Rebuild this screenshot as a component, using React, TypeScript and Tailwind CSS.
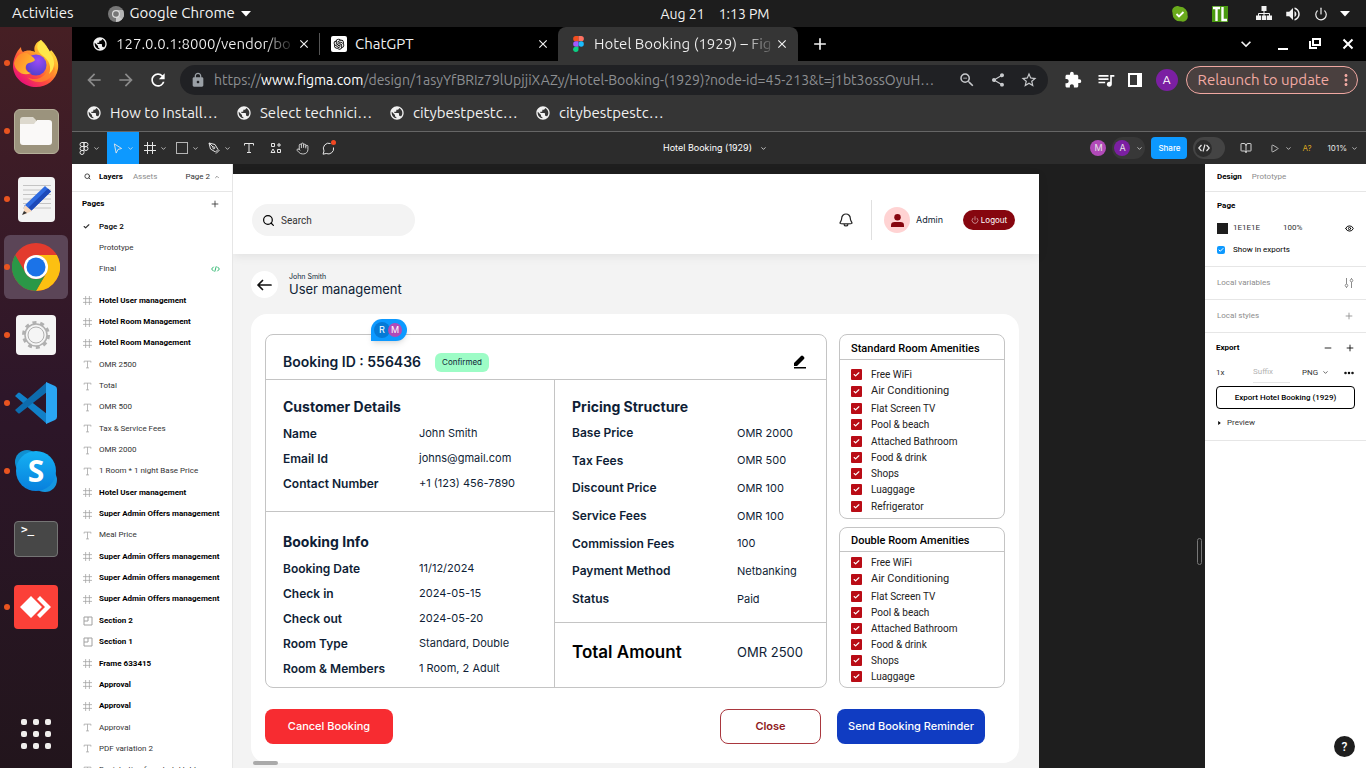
import React from "react";
import {
  MdPublic, MdArrowBack, MdArrowForward, MdRefresh, MdLock, MdZoomOut, MdShare, MdStarBorder,
  MdExtension, MdQueueMusic, MdClose, MdAdd, MdMoreVert, MdKeyboardArrowDown, MdVolumeUp,
} from "react-icons/md";
import { AiOutlineOpenAI } from "react-icons/ai";
import { ChevronDown, ChevronUp, Hand, BookOpen, Plus, Minus, Search, Check, Play, Power, Eye, Ellipsis } from "lucide-react";

const ui = "font-['Ubuntu','Noto_Sans',sans-serif]";
const toolbarText = "font-['Inter',sans-serif] text-[8px] leading-[12px]";
const panelText = "font-['Roboto',sans-serif] text-[8px] leading-[12px]";

/* ---------- Desktop top bar ---------- */

function SystemBar() {
  return (
    <header className="flex h-[27px] shrink-0 items-center bg-[#1d1d1d] pr-4 pl-3 text-[15px] text-[#f2f2f2]">
      <div className="flex flex-1 items-center gap-[34px]">
        <button>Activities</button>
        <button className="flex items-center gap-1.5">
          <svg viewBox="0 0 16 16" className="size-4">
            <circle cx="8" cy="8" r="8" fill="#777" />
            <path d="M8 8h8a8 8 0 0 1-8 8z" fill="#c9c9c9" />
            <path d="M8 4h7a8 8 0 0 1 1 4 8 8 0 0 1-2 5l-6-5z" fill="#b4b4b4" />
            <circle cx="8" cy="8" r="4" fill="#ddd" />
            <circle cx="8" cy="8" r="2.8" fill="#777" />
          </svg>
          <span>Google Chrome</span>
          <svg viewBox="0 0 10 6" className="h-1.5 w-2.5"><path d="M0 0h10L5 5.5z" fill="#fff" /></svg>
        </button>
      </div>
      <div className="flex gap-3.5 pl-[68px] text-sm">
        <span>Aug 21</span><span>1:13 PM</span>
      </div>
      <div className="flex flex-1 items-center justify-end">
        <svg viewBox="0 0 16 16" className="mr-6 size-4">
          <path d="M5 0a5 5 0 0 1 3 .8A7.500 7.500 0 0 1 15.500 9 5 5 0 0 1 9 15.300 7.500 7.500 0 0 1 .6 7 5 5 0 0 1 5 0z" fill="#6aab1c" />
          <path d="M4.500 8l2.500 2.500L11.500 6" fill="none" stroke="#fff" strokeWidth="1.800" />
        </svg>
        <span className="mr-7 size-4 bg-[#4a9a10]">
          <svg viewBox="0 0 16 16" className="size-4"><path d="M1 2h7M4.500 2v13M10.500 1v13h4.500" fill="none" stroke="#fff" strokeWidth="2.400" /></svg>
        </span>
        <svg viewBox="0 0 16 16" className="mr-3 size-4" fill="#f2f2f2">
          <path d="M5.500 0h5v5h-5zM0 9.500h5v4.500H0zM5.800 9.500h4.500v4.500H5.800zM11 9.500h5v4.500h-5z" />
          <path d="M8 5v5M2.500 10V7.500h11V10" fill="none" stroke="#f2f2f2" />
        </svg>
        <MdVolumeUp className="mr-3 size-[18px]" />
        <Power className="mr-3 size-[14px]" strokeWidth={2} />
        <svg viewBox="0 0 10 6" className="h-1.5 w-2.5"><path d="M0 0h10L5 5.500z" fill="#fff" /></svg>
      </div>
    </header>
  );
}

/* ---------- Dock ---------- */

const FirefoxIcon = () => (
  <svg viewBox="0 0 46 48" className="h-12 w-[46px]">
    <defs>
      <linearGradient id="ff1" x1="0.9" y1="0.1" x2="0.2" y2="0.95">
        <stop offset="0" stopColor="#fff14a" /><stop offset="0.35" stopColor="#ffa629" />
        <stop offset="0.65" stopColor="#ff4f3c" /><stop offset="1" stopColor="#e60b7d" />
      </linearGradient>
      <radialGradient id="ff2" cx="0.6" cy="0.3" r="0.8">
        <stop offset="0" stopColor="#9a4bf5" /><stop offset="1" stopColor="#4a3fc9" />
      </radialGradient>
      <linearGradient id="ff3" x1="0" y1="0" x2="1" y2="0.6">
        <stop offset="0" stopColor="#ff7b2a" /><stop offset="1" stopColor="#ffc12e" />
      </linearGradient>
    </defs>
    <path d="M28 1c5 4 7 8 8 12 1-1 2-1 2-2 6 6 8 13 7 19C43 41 34 48 23 48S1 40 0 28C0 20 3 13 8 8c0 3 1 4 2 5 3-2 8-2 12 0-2-5 1-10 6-12z" fill="url(#ff1)" />
    <circle cx="23" cy="26" r="10.500" fill="url(#ff2)" />
    <path d="M1 24c2-7 7-11 13-10 4 3 7 4 8 7-2 3-6 2-8 4-3 4-1 8 4 9-8 4-16-2-17-10z" fill="url(#ff3)" />
    <path d="M26 14c10 2 12 12 7 20-4 6-13 8-19 4 8 9 25 6 28-8-2-9-8-14-16-16z" fill="#ff8a2b" opacity=".75" />
    <path d="M28 1c-6 5-4 11 1 15 7 5 10 12 7 19 7-6 6-14 2-20C36 9 31 6 28 1z" fill="#ffe64a" />
  </svg>
);
const FilesIcon = () => (
  <div className="flex size-[45px] items-center justify-center rounded-md border border-[#b6b09a] bg-[#9b937d]">
    <svg viewBox="0 0 32 28" className="h-7 w-8">
      <path d="M0 3a3 3 0 0 1 3-3h10l3 3v6H0z" fill="#ddd9ce" />
      <path d="M0 7h14l3-4h12a3 3 0 0 1 3 3v19a3 3 0 0 1-3 3H3a3 3 0 0 1-3-3z" fill="#faf9f8" />
    </svg>
  </div>
);
const EditorIcon = () => (
  <svg viewBox="0 0 37 45" className="h-[45px] w-[37px]">
    <rect width="37" height="45" rx="4" fill="#f3f3f3" />
    <path d="M5 8.500h28M5 13h28M5 17.500h28M5 22h28M5 26.500h28M5 31h28" stroke="#c4c4c4" />
    <path d="M27 9l6 5.500L13 34l-7-5z" fill="#2f6be0" /><path d="M30 11.500l3 3L13 34l-3-3z" fill="#1d49b8" />
    <path d="M7 28l7 6-9 4z" fill="#f8d8bc" /><path d="M6 34l3 2-5 2z" fill="#333" />
  </svg>
);
const ChromeIcon = () => (
  <svg viewBox="0 0 48 48" className="size-12">
    <circle cx="24" cy="24" r="24" fill="#e33b2e" />
    <path d="M24 12h20.800A24 24 0 0 1 24 48l10.400-18z" fill="#fcc012" />
    <path d="M3.200 12L13.600 30A12 12 0 0 0 34.400 30L24 48A24 24 0 0 1 3.200 12z" fill="#2a9847" />
    <circle cx="24" cy="24" r="12" fill="#fff" /><circle cx="24" cy="24" r="9.500" fill="#1b73e8" />
  </svg>
);
const SettingsIcon = () => (
  <div className="flex size-10 items-center justify-center rounded bg-[#f5f5f5]">
    <svg viewBox="0 0 30 30" className="size-[30px]" fill="none" stroke="#b0b0b0">
      <circle cx="15" cy="15" r="12.500" strokeWidth="3" strokeDasharray="4 3.854" />
      <circle cx="15" cy="15" r="11" strokeWidth="1.500" /><circle cx="15" cy="15" r="8" />
    </svg>
  </div>
);
const CodeEditorIcon = () => (
  <svg viewBox="0 0 42 42" className="size-[42px]">
    <path d="M0 14l3-3q1-1 2 0l27 21v10z" fill="#1180c8" />
    <path d="M0 28l3 3q1 1 2 0l27-21V0z" fill="#0d6cae" />
    <path d="M31 0l9 4q2 1 2 3v28q0 2-2 3l-9 4z" fill="#2aa5f2" />
  </svg>
);
const SkypeIcon = () => (
  <div className="relative flex size-[42px] items-center justify-center font-['Open_Sans',sans-serif] text-[30px] leading-none font-bold text-white">
    <svg viewBox="0 0 42 42" className="absolute inset-0 size-[42px]">
      <defs><linearGradient id="sk" x1="0" y1="0" x2="0" y2="1"><stop offset="0" stopColor="#15b1f3" /><stop offset="1" stopColor="#0880dd" /></linearGradient></defs>
      <circle cx="12" cy="12" r="12" fill="#108fd0" /><circle cx="30" cy="30" r="12" fill="#1596e0" />
      <circle cx="21" cy="21" r="20" fill="url(#sk)" />
    </svg>
    <span className="relative">S</span>
  </div>
);
const TerminalIcon = () => (
  <div className="h-9 w-11 rounded border border-[#757575] bg-[#474747] px-1.5 pt-0.5 text-left font-['DejaVu_Sans_Mono',monospace] text-[11px] leading-3 font-bold text-white">&gt;_</div>
);
const AnyDeskIcon = () => (
  <div className="flex size-11 items-center justify-center rounded bg-[#fb4038]">
    <svg viewBox="0 0 32 22" className="h-[22px] w-8" fill="#fff"><path d="M0 11L11 0l11 11-11 11zM17 3l3-3 11 11-11 11-3-3 8-8z" /></svg>
  </div>
);

const dockApps = [
  { name: "Firefox", Icon: FirefoxIcon, running: true },
  { name: "Files", Icon: FilesIcon, running: true },
  { name: "Text Editor", Icon: EditorIcon, running: true },
  { name: "Google Chrome", Icon: ChromeIcon, running: true, active: true },
  { name: "Settings", Icon: SettingsIcon, running: true },
  { name: "Visual Studio Code", Icon: CodeEditorIcon, running: true },
  { name: "Skype", Icon: SkypeIcon, running: true },
  { name: "Terminal", Icon: TerminalIcon, running: false },
  { name: "AnyDesk", Icon: AnyDeskIcon, running: true },
];

function Dock() {
  return (
    <nav className="flex w-[72px] shrink-0 flex-col bg-linear-to-b from-[#461f24] via-[#2d1629] to-[#22151c] pt-0.5">
      {dockApps.map(({ name, Icon, running, active }) => (
        <button key={name} aria-label={name} className="relative flex h-[68px] shrink-0 items-center justify-center">
          <span className={active ? "flex size-16 items-center justify-center rounded-md bg-[#5b4557]" : "flex size-16 items-center justify-center"}>
            <Icon />
          </span>
          {running && <span className="absolute left-1 size-1.5 rounded-full bg-[#e95420]" />}
        </button>
      ))}
      <button aria-label="Show Applications" className="mt-auto mb-[19px] grid grid-cols-3 gap-1.5 self-center">
        {Array.from({ length: 9 }, (_, i) => <span key={i} className="size-1.5 rounded-[2px] bg-[#f0eeec]" />)}
      </button>
    </nav>
  );
}

/* ---------- Browser chrome ---------- */

const FigmaLogo = () => (
  <svg viewBox="0 0 12 18" className="h-4 w-[11px]">
    <path d="M3 0h3v6H3a3 3 0 0 1 0-6z" fill="#f24e1e" /><path d="M6 0h3a3 3 0 0 1 0 6H6z" fill="#ff7262" />
    <path d="M3 6h3v6H3a3 3 0 0 1 0-6z" fill="#a259ff" /><circle cx="9" cy="9" r="3" fill="#1abcfe" />
    <path d="M3 12h3v3a3 3 0 1 1-3-3z" fill="#0acf83" />
  </svg>
);

function TabStrip() {
  return (
    <div className="flex h-[34px] shrink-0 items-center bg-black text-[15px] text-[#f1f1f1]">
      <div className="flex w-[248px] items-center border-r border-[#555] pr-2 pl-5">
        <MdPublic className="mr-2 size-4 shrink-0" />
        <span className="flex-1 whitespace-nowrap"><span className="bg-linear-to-r from-[#f1f1f1] from-85% to-[#222] bg-clip-text text-transparent">127.0.0.1:8000/vendor/bo</span></span>
        <button aria-label="Close tab" className="shrink-0"><MdClose className="size-3.5" /></button>
      </div>
      <div className="flex w-[238px] items-center pr-2 pl-[11px]">
        <span className="mr-2 flex size-4 items-center justify-center rounded-xs bg-white text-black"><AiOutlineOpenAI className="size-3.5" /></span>
        <span className="flex-1">ChatGPT</span>
        <button aria-label="Close tab"><MdClose className="size-3.5" /></button>
      </div>
      <div className="flex w-60 items-center self-stretch rounded-t-lg bg-[#353535] pr-[9px] pl-[15px]">
        <FigmaLogo />
        <span className="ml-2.5 flex-1 whitespace-nowrap"><span className="bg-linear-to-r from-[#f1f1f1] from-85% to-[#555] bg-clip-text text-transparent">Hotel Booking (1929) – Fig</span></span>
        <button aria-label="Close tab" className="shrink-0"><MdClose className="size-3.5" /></button>
      </div>
      <button aria-label="New tab" className="ml-3"><MdAdd className="size-5" /></button>
      <div className="mr-3 ml-auto flex items-center">
        <button aria-label="Search tabs"><MdKeyboardArrowDown className="size-5" /></button>
        <button aria-label="Minimize" className="ml-[22px] flex h-3 w-2.5 items-end"><span className="h-0.5 w-2.5 bg-white" /></button>
        <button aria-label="Restore" className="ml-[21px]">
          <svg viewBox="0 0 12 12" className="size-3" fill="none" stroke="#fff" strokeWidth="2"><path d="M4 1h7v6H4zM1 3v7h7" /></svg>
        </button>
        <button aria-label="Close window" className="ml-[21px]"><svg viewBox="0 0 12 12" className="size-3" stroke="#fff" strokeWidth="2"><path d="M1.500 1.500l9 9M10.500 1.500l-9 9" /></svg></button>
      </div>
    </div>
  );
}

function AddressBar() {
  return (
    <div className="flex h-[38px] shrink-0 items-center bg-[#353535] pr-2 pl-3 text-white">
      <button aria-label="Back"><MdArrowBack className="size-5 text-[#8b8b8b]" /></button>
      <button aria-label="Forward" className="ml-3"><MdArrowForward className="size-5 text-[#8b8b8b]" /></button>
      <button aria-label="Reload" className="ml-3"><MdRefresh className="size-5" /></button>
      <div className="mr-4 ml-3 flex h-[30px] min-w-0 flex-1 items-center rounded-full bg-[#202124] px-2.5 text-[#c8cacd]">
        <MdLock className="size-4 shrink-0 text-[#9aa0a6]" />
        <span className="ml-2 min-w-0 flex-1 text-sm whitespace-nowrap text-[#8d8f92]">
          https://<span className="text-white">www.figma.com</span>/design/1asyYfBRIz79lUpjjiXAZy/Hotel-Booking-(1929)?node-id=45-213&amp;t=j1bt3ossOyuH…
        </span>
        <button aria-label="Zoom" className="ml-2.5"><MdZoomOut className="size-[18px]" /></button>
        <button aria-label="Share page" className="ml-3.5"><MdShare className="size-4" /></button>
        <button aria-label="Bookmark" className="ml-3.5"><MdStarBorder className="size-[18px]" /></button>
      </div>
      <button aria-label="Extensions"><MdExtension className="size-[18px]" /></button>
      <button aria-label="Media" className="ml-3.5"><MdQueueMusic className="size-5" /></button>
      <button aria-label="Side panel" className="ml-3"><svg viewBox="0 0 14 14" className="size-3.5"><path d="M0 0h14v14H0zM2 2v10h7V2z" fill="#fff" fillRule="evenodd" /></svg></button>
      <button className="ml-3.5 size-[22px] rounded-full bg-[#7b1fa2] text-xs">A</button>
      <button className="ml-2 flex h-7 items-center rounded-full border border-[#f0a8a2] bg-[#4a403f] pr-0.5 pl-[11px] text-[15px] whitespace-nowrap text-[#f2aaa3]">
        Relaunch to update<MdMoreVert className="ml-2 size-[18px]" />
      </button>
    </div>
  );
}

function Bookmarks() {
  const items = [
    ["How to Install…", "w-[150px]"], ["Select technici…", "w-[153px]"],
    ["citybestpestc…", "w-[146px]"], ["citybestpestc…", "w-[146px]"],
  ];
  return (
    <nav className="flex h-[33px] shrink-0 items-center border-b border-[#666] bg-[#353535] pb-1 pl-3.5 text-[15px] text-[#f1f1f1]">
      {items.map(([label, width], i) => (
        <a key={i} href="#" className={`flex shrink-0 items-center gap-2 whitespace-nowrap ${width}`}><MdPublic className="size-4" />{label}</a>
      ))}
    </nav>
  );
}

/* ---------- Figma toolbar ---------- */

const Chev = () => <ChevronDown className="size-[7px]" strokeWidth={2.5} />;
const thin = { fill: "none", stroke: "currentColor", strokeWidth: 1 } as const;

const FrameGlyph = ({ className }: { className: string }) => (
  <svg viewBox="0 0 12 12" className={className} {...thin}><path d="M3.500 0v12M8.500 0v12M0 3.500h12M0 8.500h12" /></svg>
);
const TextGlyph = ({ className }: { className: string }) => (
  <svg viewBox="0 0 12 12" className={className} {...thin}><path d="M1.500 3.500v-2h9v2M6 1.500v9M4 10.500h4" /></svg>
);
const SectionGlyph = () => (
  <svg viewBox="0 0 10 10" className="size-2.5" {...thin}><path d="M1 1h8v8H1zM1 5h4V1" /></svg>
);
const CodeGlyph = ({ className }: { className: string }) => (
  <svg viewBox="0 0 12 10" className={className} {...thin} strokeWidth={1.2}><path d="M3.500 2L.8 5l2.700 3M8.500 2l2.700 3-2.700 3M7 1.500L5 8.500" /></svg>
);

function FigmaToolbar() {
  const tool = "flex h-8 w-8 items-center justify-center gap-1";
  return (
    <div className={`flex h-8 shrink-0 items-center bg-[#2c2c2c] pr-1 text-[#e6e6e6] ${toolbarText}`}>
      <div className="flex flex-1 items-center">
        <button aria-label="Main menu" className="flex h-8 w-[35px] items-center justify-center gap-1">
          <svg viewBox="0 0 10 13" className="h-[13px] w-2.5" {...thin}><path d="M5 .5H3a2 2 0 0 0 0 4h2zM5 .5h2a2 2 0 0 1 0 4H5zM5 4.500H3a2 2 0 0 0 0 4h2zM5 8.500H3a2 2 0 1 0 2 2z" /><circle cx="7" cy="6.500" r="2" /></svg>
          <Chev />
        </button>
        <button aria-label="Move" className={`${tool} bg-[#0d99ff]`}><svg viewBox="0 0 10 12" className="h-[11px] w-2.5" {...thin}><path d="M1 1l8 5-4 1-2 4z" /></svg><Chev /></button>
        <button aria-label="Frame" className={tool}><FrameGlyph className="size-3" /><Chev /></button>
        <button aria-label="Rectangle" className={tool}><span className="size-3 border border-[#b5b5b5]" /><Chev /></button>
        <button aria-label="Pen" className={tool}>
          <svg viewBox="0 0 12 12" className="size-3" {...thin}><path d="M1 1l6 1.500 3 5L7.500 10l-5-3zM1 1l4 4M8 11.500l3.500-3.500" /><circle cx="5.800" cy="5.800" r="1" /></svg><Chev />
        </button>
        <button aria-label="Text" className="flex w-[27px] justify-center"><TextGlyph className="size-3" /></button>
        <button aria-label="Resources" className="flex w-[27px] justify-center">
          <svg viewBox="0 0 12 12" className="size-3" {...thin}><path d="M1.500 1.500h3v3h-3zM9 1v4M7 3h4M3 7l2 3.500H1z" /><path d="M7.500 7.500h3v3h-3z" /></svg>
        </button>
        <button aria-label="Hand" className="flex w-[26px] justify-center"><Hand className="size-[13px]" strokeWidth={1.6} /></button>
        <button aria-label="Comment" className="relative flex w-[26px] justify-center">
          <svg viewBox="0 0 13 13" className="size-[13px]" {...thin}><path d="M8.500 1.500A5.300 5.300 0 0 0 2 9l-1 3.200 3.200-.7A5.300 5.300 0 0 0 11.500 5.500" /></svg>
          <span className="absolute -top-0.5 right-[5px] size-[5px] rounded-full bg-[#f24822]" />
        </button>
      </div>
      <button className="flex items-center gap-2 text-[9px] text-white">Hotel Booking (1929)<Chev /></button>
      <div className="flex flex-1 items-center justify-end pr-1">
        <span className="flex size-4 items-center justify-center rounded-full bg-[#b14ab8] text-[9px]">M</span>
        <button className="ml-1.5 flex h-[22px] w-[33px] items-center gap-1.5 rounded-full bg-[#383838] pl-0.5">
          <span className="flex size-4 items-center justify-center rounded-full bg-[#7b1fa2] text-[9px]">A</span><Chev />
        </button>
        <button className="ml-1.5 h-[22px] w-9 rounded-sm bg-[#0d99ff] font-medium text-white">Share</button>
        <button aria-label="Dev mode" className="ml-1.5 flex h-[22px] w-8 items-center rounded-full bg-[#444] pl-0.5">
          <span className="flex size-[17px] items-center justify-center rounded-full bg-[#2c2c2c]"><CodeGlyph className="h-2.5 w-3" /></span>
        </button>
        <button aria-label="Library" className="ml-[15px]"><BookOpen className="size-3" strokeWidth={1.8} /></button>
        <button aria-label="Present" className="ml-[18px] flex items-center gap-1.5"><Play className="size-[9px]" /><Chev /></button>
        <span className="ml-2.5 text-[#d9a520]">A?</span>
        <button className="ml-4 flex items-center gap-1">101%<Chev /></button>
      </div>
    </div>
  );
}

/* ---------- Layers panel ---------- */

type Layer = ["frame" | "text" | "section", string];
const layers: Layer[] = [
  ["frame", "Hotel User management"], ["frame", "Hotel Room Management"], ["frame", "Hotel Room Management"],
  ["text", "OMR 2500"], ["text", "Total"], ["text", "OMR 500"], ["text", "Tax & Service Fees"], ["text", "OMR 2000"],
  ["text", "1 Room * 1 night Base Price"], ["frame", "Hotel User management"], ["frame", "Super Admin Offers management"],
  ["text", "Meal Price"], ["frame", "Super Admin Offers management"], ["frame", "Super Admin Offers management"],
  ["frame", "Super Admin Offers management"], ["section", "Section 2"], ["section", "Section 1"], ["frame", "Frame 633415"],
  ["frame", "Approval"], ["frame", "Approval"], ["text", "Approval"], ["text", "PDF variation 2"], ["text", "Registration form hotel table"],
];

function LayersPanel() {
  return (
    <aside className={`w-[161px] shrink-0 overflow-hidden border-r border-[#e6e6e6] bg-white text-[#333] ${panelText}`}>
      <div className="flex h-7 items-center border-b border-[#e6e6e6] pr-3 pb-0.5 pl-3">
        <Search className="mr-2 size-[7px]" strokeWidth={3} />
        <button className="font-bold text-black">Layers</button>
        <button className="ml-2.5 text-[#8c8c8c]">Assets</button>
        <button className="ml-auto flex items-center gap-1">Page 2<ChevronUp className="size-1.5" /></button>
      </div>
      <div className="flex h-6 items-center justify-between pr-3 pl-2.5">
        <h2 className="font-bold text-black">Pages</h2>
        <button aria-label="Add page"><Plus className="size-2.5" /></button>
      </div>
      <ul>
        {["Page 2", "Prototype", "Final"].map((p, i) => (
          <li key={p} className="flex h-[21px] items-center pr-3 pl-[11px]">
            <span className="w-4">{i === 0 && <Check className="size-[7px]" strokeWidth={4} />}</span>
            <span className={i === 0 ? "font-medium text-black" : ""}>{p}</span>
            {i === 2 && <CodeGlyph className="ml-auto h-2 w-[9px] text-[#14ae5c]" />}
          </li>
        ))}
      </ul>
      <ul className="mt-[11px] flex h-[491px] flex-col">
        {layers.map(([kind, name], i) => (
          <li key={i} className="flex flex-1 items-center pl-[11px] whitespace-nowrap">
            <span className="w-4 text-[#a0a0a0]">
              {kind === "frame" ? <FrameGlyph className="size-[9px]" /> : kind === "text" ? <TextGlyph className="size-[9px]" /> : <SectionGlyph />}
            </span>
            <span className={kind === "text" ? "" : "font-bold text-black"}>{name}</span>
          </li>
        ))}
      </ul>
    </aside>
  );
}

/* ---------- Properties panel ---------- */

function PropertiesPanel() {
  return (
    <aside className={`relative w-[161px] shrink-0 bg-white text-[#333] ${panelText}`}>
      <div className="flex h-7 items-center gap-2.5 border-b border-[#e6e6e6] pb-0.5 pl-3">
        <button className="font-bold text-black">Design</button><button className="text-[#8c8c8c]">Prototype</button>
      </div>
      <section className="h-[75px] border-b border-[#e6e6e6] pt-2 pr-3 pl-3">
        <h2 className="font-bold text-black">Page</h2>
        <div className="mt-2.5 flex items-center">
          <span className="mr-[5px] size-[11px] bg-[#1e1e1e]" />
          <span className="w-[50px]">1E1E1E</span><span>100%</span>
          <Eye className="ml-auto size-[9px] text-black" strokeWidth={2.5} />
        </div>
        <label className="mt-2.5 flex items-center gap-2 text-black">
          <span className="relative flex size-2">
            <input type="checkbox" defaultChecked className="size-2 appearance-none rounded-xs bg-[#0d99ff]" />
            <Check className="pointer-events-none absolute inset-px size-1.5 text-white" strokeWidth={4} />
          </span>
          Show in exports
        </label>
      </section>
      <div className="flex h-[33px] items-center justify-between border-b border-[#e6e6e6] px-3 text-[#8c8c8c]">
        Local variables
        <svg viewBox="0 0 10 10" className="size-2.5" {...thin}><path d="M2.500 0v6M2.500 9v1M7.500 0v1M7.500 4v6" /><circle cx="2.500" cy="7.500" r="1.300" /><circle cx="7.500" cy="2.500" r="1.300" /></svg>
      </div>
      <div className="flex h-[33px] items-center justify-between border-b border-[#e6e6e6] px-3 text-[#8c8c8c]">Local styles<Plus className="size-2.5" /></div>
      <section className="h-[108px] border-b border-[#e6e6e6] px-[11px] pt-[9px]">
        <div className="flex items-center text-black">
          <h2 className="font-bold">Export</h2><Minus className="mr-3 ml-auto size-2.5" /><Plus className="size-2.5" />
        </div>
        <div className="mt-2 flex items-center">
          <span className="w-[37px]">1x</span>
          <input aria-label="Suffix" placeholder="Suffix" className="w-[37px] border-b border-[#e6e6e6] pt-1 pb-1 placeholder:text-[#b3b3b3]" />
          <button className="ml-3 flex items-center gap-1">PNG<Chev /></button>
          <Ellipsis className="ml-auto size-3 text-black" strokeWidth={3} />
        </div>
        <button className="mt-[3px] h-[23px] w-full rounded border border-black font-medium text-black">Export Hotel Booking (1929)</button>
        <button className="mt-2 flex items-center gap-1.5 pl-0.5"><svg viewBox="0 0 4 6" className="h-1 w-[3px]"><path d="M0 0l4 3-4 3z" /></svg>Preview</button>
      </section>
      <button className="absolute right-[11px] bottom-[11px] size-[21px] rounded-full bg-[#1e1e1e] text-xs font-medium text-white">?</button>
    </aside>
  );
}

/* ---------- Artboard ---------- */

type Pair = [string, string];
const customer: Pair[] = [["Name", "John Smith"], ["Email Id", "johns@gmail.com"], ["Contact Number", "+1 (123) 456-7890"]];
const booking: Pair[] = [["Booking Date", "11/12/2024"], ["Check in", "2024-05-15"], ["Check out", "2024-05-20"], ["Room Type", "Standard, Double"], ["Room & Members", "1 Room, 2 Adult"]];
const pricing: Pair[] = [["Base Price", "OMR 2000"], ["Tax Fees", "OMR 500"], ["Discount Price", "OMR 100"], ["Service Fees", "OMR 100"], ["Commission Fees", "100"], ["Payment Method", "Netbanking"], ["Status", "Paid"]];
const amenities = ["Free WiFi", "Air Conditioning", "Flat Screen TV", "Pool & beach", "Attached Bathroom", "Food & drink", "Shops", "Luaggage", "Refrigerator"];

function Details({ rows, height, labelWidth }: { rows: Pair[]; height: string; labelWidth: string }) {
  return (
    <dl className={`flex flex-col ${height}`}>
      {rows.map(([k, v]) => (
        <div key={k} className="flex flex-1 items-center whitespace-nowrap">
          <dt className={`shrink-0 text-xs font-semibold ${labelWidth}`}>{k}</dt>
          <dd className="text-[11px]">{v}</dd>
        </div>
      ))}
    </dl>
  );
}

function AmenityBox({ title, items, height, headHeight, listPad }: { title: string; items: string[]; height: string; headHeight: string; listPad: string }) {
  return (
    <section className={`flex flex-col rounded-lg border border-[#c4c4c4] font-['Roboto',sans-serif] text-[#222] ${height}`}>
      <h3 className={`flex shrink-0 items-center border-b border-[#c4c4c4] px-[11px] pt-1 text-[11px] font-medium text-black ${headHeight}`}>{title}</h3>
      <ul className={`flex flex-1 flex-col justify-between px-[11px] ${listPad}`}>
        {items.map((name) => (
          <li key={name}>
            <label className={name === "Air Conditioning" ? "flex h-[18px] items-center gap-[9px] text-[11px]" : "flex h-4 items-center gap-[9px] text-[10px]"}>
              <span className="relative flex size-[11px]">
                <input type="checkbox" defaultChecked className="size-[11px] appearance-none rounded-[1px] bg-[#b90c16]" />
                <Check className="pointer-events-none absolute inset-0.5 size-[7px] text-white" strokeWidth={4} />
              </span>
              {name}
            </label>
          </li>
        ))}
      </ul>
    </section>
  );
}

function Artboard() {
  return (
    <div className="mt-2.5 mr-[166px] flex min-w-[806px] flex-1 flex-col bg-[#f3f3f3] font-['Inter',sans-serif] text-[#0f1e36]">
      <header className="flex h-20 shrink-0 items-center bg-white pr-6 pt-3 pl-[19px] shadow-[0_2px_10px_rgba(0,0,0,0.08)]">
        <label className="flex h-8 w-[163px] items-center gap-1.5 rounded-full bg-[#f3f3f3] pl-2.5 text-black">
          <Search className="size-[13px]" strokeWidth={2.2} />
          <input aria-label="Search" placeholder="Search" className="w-24 font-['Roboto',sans-serif] text-[10px] placeholder:text-[#333]" />
        </label>
        <button aria-label="Notifications" className="ml-auto">
          <svg viewBox="0 0 14 14" className="size-3.5" fill="none" stroke="#222" strokeWidth="1.200" strokeLinejoin="round"><path d="M7 1a4.300 4.300 0 0 0-4.300 4.300C2.700 8 1 8.800 1 10.200c0 .8 12 .8 12 0 0-1.400-1.700-2.200-1.700-4.900A4.300 4.300 0 0 0 7 1zM5 11.500c.5 2 3.500 2 4 0" /></svg>
        </button>
        <span className="ml-[18px] h-10 w-px bg-[#e0e0e0]" />
        <span className="ml-3 flex size-[26px] items-center justify-center rounded-full bg-[#ffd3d3]">
          <svg viewBox="0 0 14 14" className="size-[13px]" fill="#86060f"><circle cx="7" cy="3.500" r="3.500" /><path d="M0 14v-2q0-3.500 4-3.500h6q4 0 4 3.500v2z" /></svg>
        </span>
        <span className="ml-1.5 w-[47px] text-[9px]">Admin</span>
        <button className="flex h-5 w-[52px] items-center justify-center gap-0.5 rounded-full bg-[#86060f] text-[8px] text-white"><Power className="size-2" strokeWidth={1.5} />Logout</button>
      </header>

      <div className="mt-[17px] ml-[18px] flex items-center gap-[11px]">
        <button aria-label="Go back" className="flex size-[27px] items-center justify-center rounded-full bg-white">
          <svg viewBox="0 0 15 12" className="h-3 w-[15px]" fill="none" stroke="#111" strokeWidth="1.700" strokeLinecap="round" strokeLinejoin="round"><path d="M14 6H1M5.500 1.500L1 6l4.500 4.500" /></svg>
        </button>
        <div>
          <p className="text-[7px] leading-2">John Smith</p>
          <h1 className="text-[13px] leading-4">User management</h1>
        </div>
      </div>

      <main className="relative mt-4 mr-5 ml-[18px] rounded-2xl bg-white px-3.5 pt-5 pb-[19px]">
        <div className="absolute top-[5px] left-[120px] flex h-[22px] w-9 items-center rounded-t-full rounded-br-full bg-[#0d99ff] pl-[3px] text-[9px] text-white shadow-md">
          <span className="flex size-4 items-center justify-center rounded-full bg-[#067ad6]">R</span>
          <span className="-ml-0.5 flex size-3.5 items-center justify-center rounded-full bg-[#b14ab8]">M</span>
        </div>
        <div className="flex gap-3">
          <section className="flex flex-1 flex-col rounded-lg border border-[#c4c4c4]">
            <div className="flex h-[45px] items-center border-b border-[#c4c4c4] pt-2.5 pr-[19px] pl-[17px]">
              <h2 className="text-sm font-semibold">Booking ID : 556436</h2>
              <span className="ml-3.5 flex h-[19px] items-center rounded-md bg-[#9dfcc6] px-[7px] text-[8px]">Confirmed</span>
              <button aria-label="Edit booking" className="ml-auto"><svg viewBox="0 0 14 14" className="size-3.5" fill="#000"><path d="M1 12h12v1.500H1zM1 8l7-7q1-1 2 0l1 1q1 1 0 2l-7 7H1z" /></svg></button>
            </div>
            <div className="flex flex-1">
              <div className="w-[289px] border-r border-[#c4c4c4]">
                <div className="h-[132px] border-b border-[#c4c4c4] pt-[17px] pl-[17px]">
                  <h3 className="mb-1 text-sm leading-5 font-bold">Customer Details</h3>
                  <Details rows={customer} height="h-[75px]" labelWidth="w-[136px]" />
                </div>
                <div className="pt-5 pl-[17px]">
                  <h3 className="mb-1 text-sm leading-5 font-bold">Booking Info</h3>
                  <Details rows={booking} height="h-[125px]" labelWidth="w-[136px]" />
                </div>
              </div>
              <div className="flex flex-1 flex-col">
                <div className="h-[243px] border-b border-[#c4c4c4] pt-[17px] pl-[17px]">
                  <h3 className="mb-0.5 text-sm leading-5 font-bold">Pricing Structure</h3>
                  <Details rows={pricing} height="h-[194px]" labelWidth="w-[165px]" />
                </div>
                <div className="flex flex-1 items-center pb-1 pl-[17px]">
                  <h3 className="w-[165px] text-[17px] font-semibold text-black">Total Amount</h3><span className="text-[13px]">OMR 2500</span>
                </div>
              </div>
            </div>
          </section>
          <div className="flex w-[166px] flex-col gap-2">
            <AmenityBox title="Standard Room Amenities" items={amenities} height="h-[185px]" headHeight="h-[25px]" listPad="pt-1.5 pb-1" />
            <AmenityBox title="Double Room Amenities" items={amenities.slice(0, 8)} height="h-[161px]" headHeight="h-6" listPad="pt-0.5 pb-0.5" />
          </div>
        </div>
        <div className="mt-[21px] mr-5 flex h-[35px] gap-4 text-[11px] font-semibold">
          <button className="mr-auto w-32 rounded-lg bg-[#f72c31] font-medium text-white">Cancel Booking</button>
          <button className="w-[101px] rounded-lg border border-[#a9373e] text-[#8e1a22]">Close</button>
          <button className="w-[148px] rounded-lg bg-[#103cc2] font-medium text-white">Send Booking Reminder</button>
        </div>
      </main>
    </div>
  );
}

export default function App() {
  return (
    <div className={`flex h-screen flex-col overflow-hidden bg-[#1e1e1e] ${ui}`}>
      <SystemBar />
      <div className="flex min-h-0 flex-1">
        <Dock />
        <div className="flex min-w-0 flex-1 flex-col">
          <TabStrip />
          <AddressBar />
          <Bookmarks />
          <FigmaToolbar />
          <div className="flex min-h-0 flex-1">
            <LayersPanel />
            <div className="relative flex min-w-0 flex-1 overflow-hidden bg-[#1e1e1e]">
              <Artboard />
              <span className="absolute bottom-[3px] left-5 h-1 w-[25px] rounded-full bg-[#aaa]" />
              <span className="absolute right-[3px] bottom-[203px] h-[27px] w-[5px] rounded-full border border-[#777]" />
            </div>
            <PropertiesPanel />
          </div>
        </div>
      </div>
    </div>
  );
}
